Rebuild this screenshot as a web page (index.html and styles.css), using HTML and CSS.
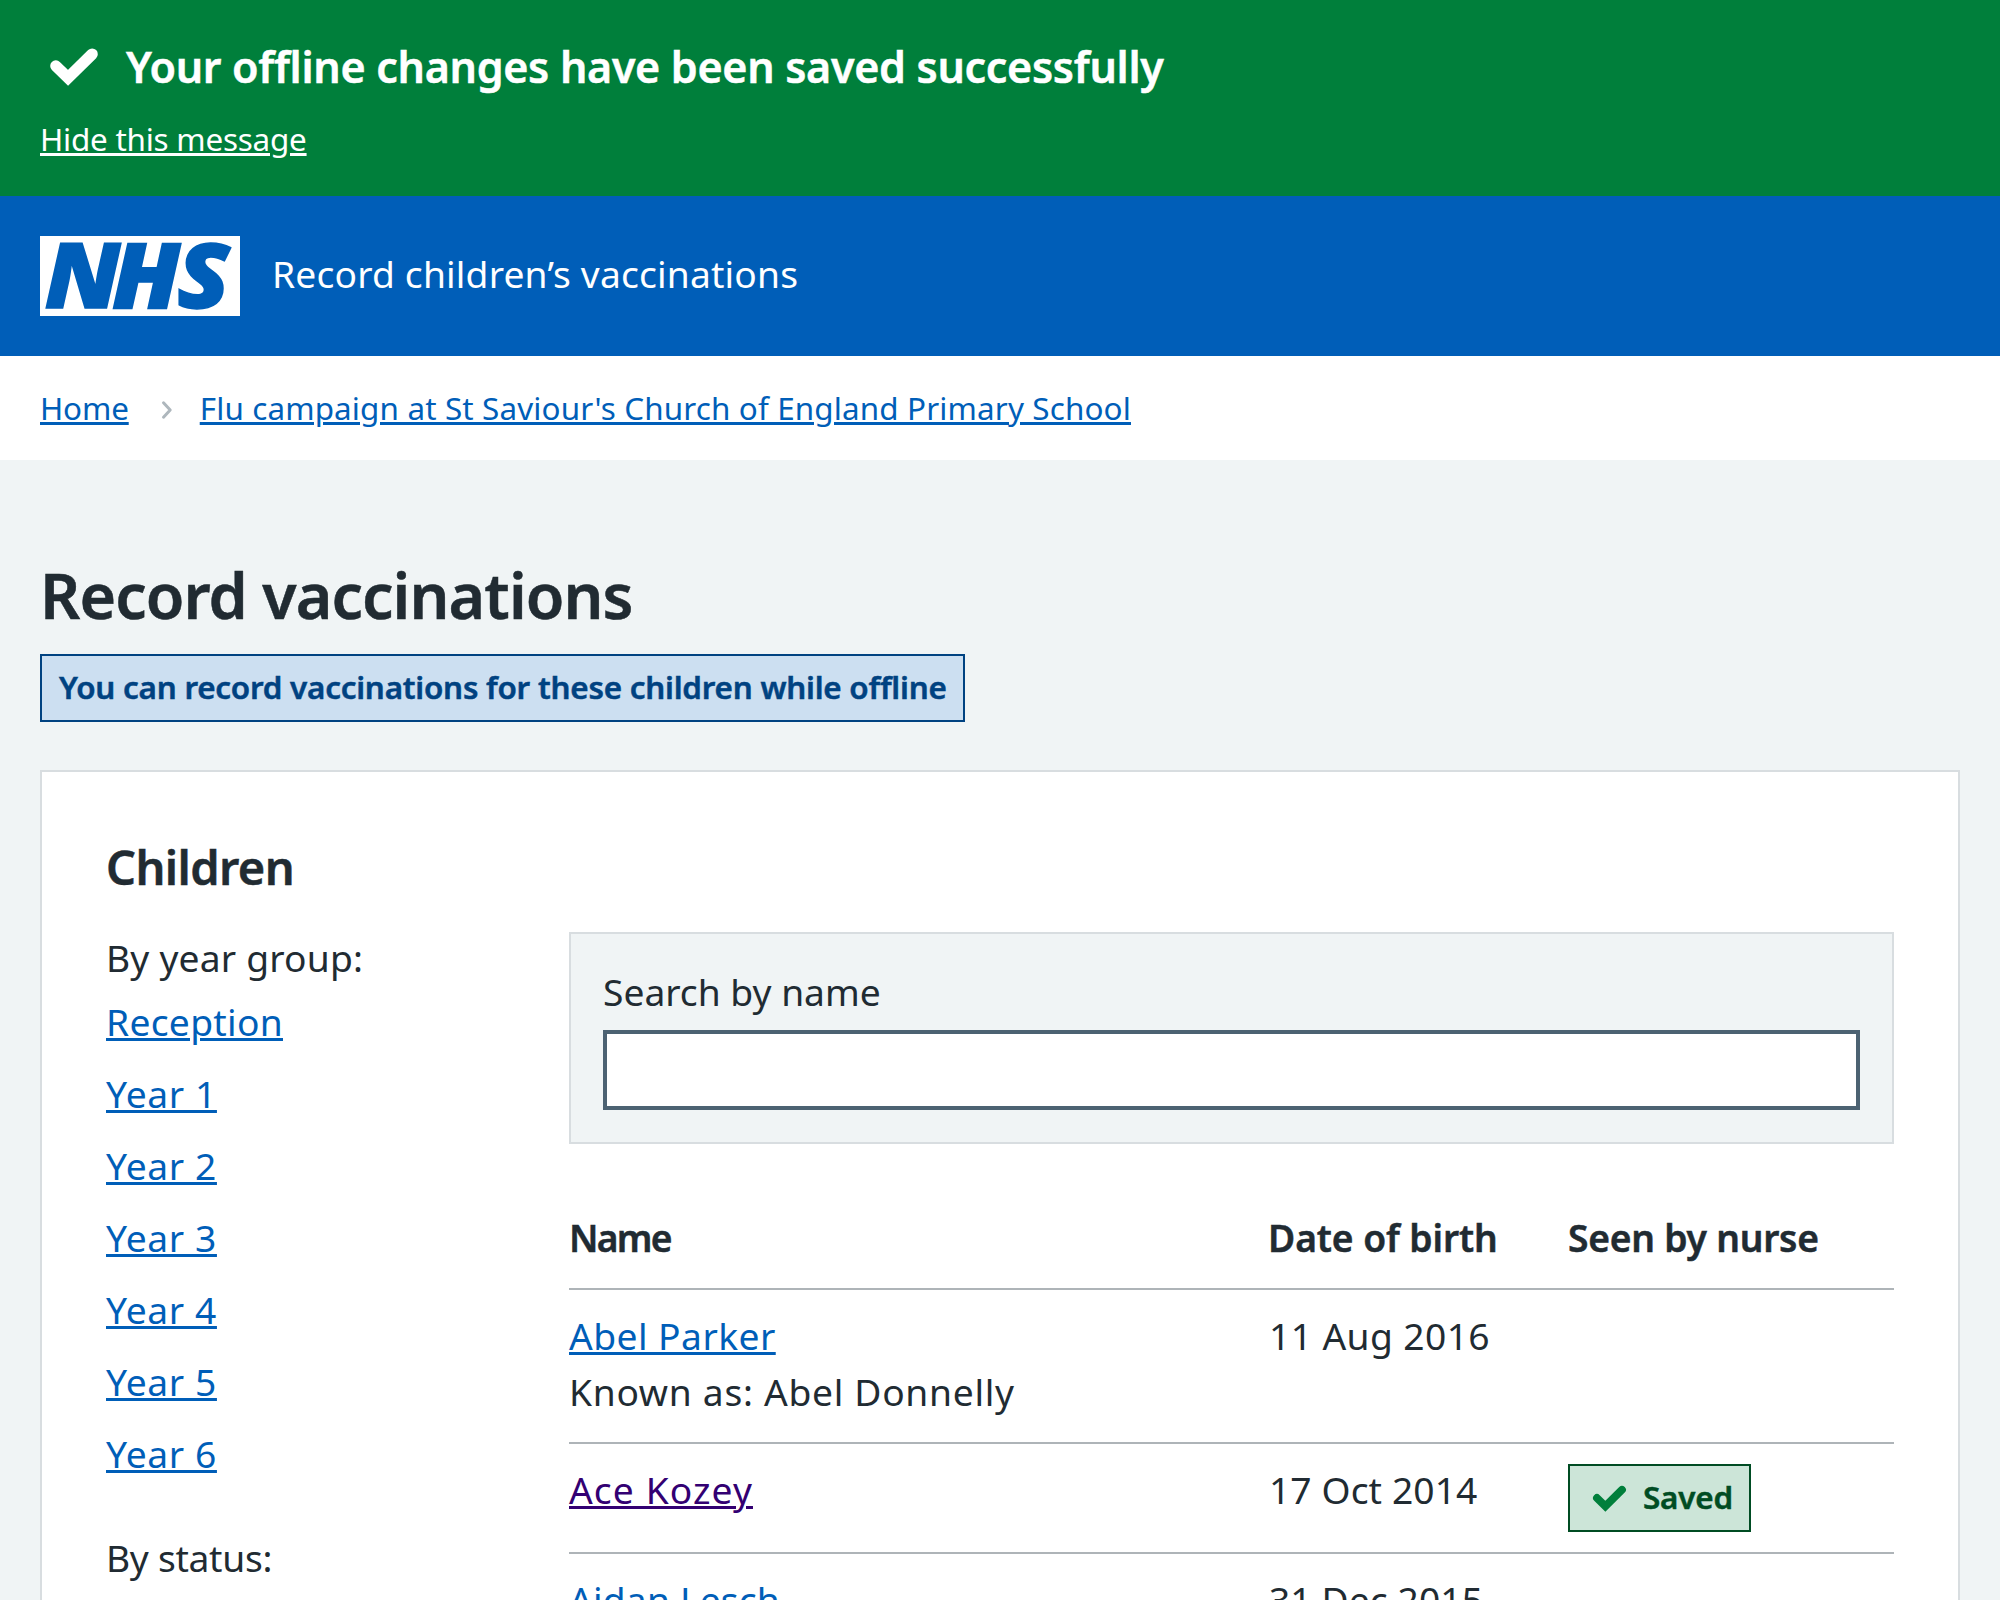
FILE: index.html
```html
<!DOCTYPE html>
<html lang="en">
<head>
<meta charset="utf-8">
<title>Record vaccinations</title>
<link rel="stylesheet" href="styles.css">
</head>
<body>
<div class="banner">
  <div class="banner-row">
    <svg class="banner-tick" viewBox="0 0 24 24" fill="none" stroke="currentColor" stroke-width="4" stroke-linecap="round"><path d="M18.4 7.8l-8.5 8.4L5.6 12"/></svg>
    <h2 class="banner-title">Your offline changes have been saved successfully</h2>
  </div>
  <a class="banner-link" href="#">Hide this message</a>
</div>

<header class="header">
  <svg class="logo" viewBox="0 0 200 80" role="img" aria-label="NHS">
    <rect width="200" height="80" fill="#fff"/>
    <text class="logo-text" transform="scale(1.07 1)" y="72.3" x="4.400 67.4 128.2">NHS</text>
  </svg>
  <span class="service">Record children’s vaccinations</span>
</header>

<nav class="breadcrumb">
  <a class="crumb-home" href="#">Home</a>
  <svg class="chevron" viewBox="0 0 12 20" fill="none" stroke="currentColor" stroke-width="3" stroke-linecap="round" stroke-linejoin="round"><path d="M2.5 2.8 9.2 10l-6.700 7.200"/></svg>
  <a class="crumb-page" href="#">Flu campaign at St Saviour's Church of England Primary School</a>
</nav>

<main class="main">
  <h1 class="title">Record vaccinations</h1>
  <strong class="tag tag-blue">You can record vaccinations for these children while offline</strong>

  <section class="card">
    <h2 class="card-title">Children</h2>
    <div class="columns">
      <aside class="filters">
        <p class="filter-title">By year group:</p>
        <ul class="filter-list">
          <li><a class="reception" href="#">Reception</a></li>
          <li><a href="#">Year 1</a></li>
          <li><a href="#">Year 2</a></li>
          <li><a href="#">Year 3</a></li>
          <li><a href="#">Year 4</a></li>
          <li><a href="#">Year 5</a></li>
          <li><a href="#">Year 6</a></li>
        </ul>
        <p class="filter-title by-status">By status:</p>
      </aside>
      <div class="content">
        <form class="search">
          <label class="search-label" for="search">Search by name</label>
          <input class="search-input" id="search" type="text">
        </form>
        <table class="table">
          <colgroup><col class="col-name"><col class="col-dob"><col></colgroup>
          <thead>
            <tr><th class="th-name">Name</th><th class="th-dob">Date of birth</th><th class="th-seen">Seen by nurse</th></tr>
          </thead>
          <tbody>
            <tr>
              <td><a class="abel" href="#">Abel Parker</a><br><span class="known">Known as: Abel Donnelly</span></td>
              <td class="date-wide">11 Aug 2016</td>
              <td></td>
            </tr>
            <tr>
              <td><a class="visited" href="#">Ace Kozey</a></td>
              <td class="date">17 Oct 2014</td>
              <td class="cell-tag"><strong class="tag tag-green"><svg class="tag-tick" viewBox="0 0 24 24" fill="none" stroke="currentColor" stroke-width="4" stroke-linecap="round"><path d="M18.4 7.8l-8.5 8.4L5.6 12"/></svg>Saved</strong></td>
            </tr>
            <tr>
              <td><a class="aidan" href="#">Aidan Lesch</a></td>
              <td class="date">31 Dec 2015</td>
              <td></td>
            </tr>
          </tbody>
        </table>
      </div>
    </div>
  </section>
</main>
</body>
</html>
```
FILE: styles.css
```css
* { box-sizing: border-box; }

body {
  margin: 0;
  height: 1600px;
  overflow: hidden;
  background: #f0f4f5;
  color: #212b32;
  font: 400 37.2px/56px "Noto Sans", "Open Sans", sans-serif;
}

h1, h2, p, ul { margin: 0; padding: 0; }

/* Bold text sits slightly heavier than the semi-bold face */
h1, h2, th, strong { -webkit-text-stroke: 0.5px currentColor; }

a {
  color: #005eb8;
  text-decoration: underline;
  text-decoration-thickness: 3px;
  text-underline-offset: 2px;
}

/* Success banner */
.banner {
  height: 196px;
  padding: 32px 40px 0;
  background: #007f3b;
  color: #fff;
}
.banner-row { display: flex; align-items: center; gap: 18px; height: 68px; }
.banner-tick { width: 68px; height: 68px; flex: none; }
.banner-title { padding-top: 2px; font-size: 43px; font-weight: 600; letter-spacing: -0.3px; }
.banner-link {
  display: inline-block;
  margin-top: 15px;
  color: #fff;
  font-size: 31.4px;
  line-height: 48px;
  letter-spacing: -0.22px;
}

/* Header */
.header {
  display: flex;
  align-items: center;
  gap: 32px;
  height: 160px;
  padding: 0 40px;
  background: #005eb8;
  color: #fff;
}
.logo { width: 200px; height: 80px; }
.logo-text {
  font: italic 800 89.500px "Open Sans", sans-serif;
  fill: #005eb8;
  stroke: #005eb8;
  stroke-width: 1.5px;
}
.service { padding-bottom: 5px; letter-spacing: 0.18px; }

/* Breadcrumb */
.breadcrumb {
  display: flex;
  align-items: center;
  height: 104px;
  padding: 0 40px;
  background: #fff;
  font-size: 31.4px;
}
.crumb-home { letter-spacing: -0.15px; }
.crumb-page { letter-spacing: 0.14px; }
.chevron { width: 12px; height: 20px; margin: 4px 27px 0 32px; color: #aeb7bd; }

/* Page */
.main { padding: 95px 40px 0; }
.title {
  margin-bottom: 19px;
  font-size: 62.7px;
  font-weight: 600;
  line-height: 80px;
  letter-spacing: -0.9px;
}
.tag {
  display: flex;
  align-items: center;
  width: fit-content;
  height: 68px;
  padding: 0 16px 2px;
  border: 2px solid;
  font-size: 31.4px;
  font-weight: 600;
}
.tag-blue {
  width: 925px;
  padding-left: 17px;
  background: #ccdff1;
  color: #004281;
  letter-spacing: -0.23px;
  white-space: nowrap;
}
.tag-green { width: 183px; gap: 10px; background: #cce5d8; color: #004c23; letter-spacing: -0.15px; }
.tag-tick { width: 48px; height: 48px; margin-top: 2px; color: #007f3b; }

.card {
  height: 830px;
  margin-top: 48px;
  padding: 67px 64px 0;
  border: 2px solid #d8dde0;
  border-bottom: 0;
  background: #fff;
}
.card-title { margin-bottom: 35px; font-size: 47px; font-weight: 600; letter-spacing: -0.6px; }
.columns { display: grid; grid-template-columns: 463px 1fr; }

/* Filters */
.filter-title { letter-spacing: 0.2px; }
.filter-list { list-style: none; line-height: 72px; letter-spacing: 0.6px; }
.reception { letter-spacing: 0.3px; }
.by-status { margin-top: 40px; letter-spacing: -0.3px; }

/* Search */
.search {
  height: 212px;
  margin-top: 2px;
  padding: 30px 32px 0;
  border: 2px solid #d8dde0;
  background: #f0f4f5;
}
.search-label { display: block; margin-bottom: 10px; }
.search-input {
  display: block;
  width: 100%;
  height: 80px;
  border: 4px solid #4c6272;
  border-radius: 0;
  background: #fff;
}

/* Table */
.table {
  width: 100%;
  margin-top: 66px;
  border-spacing: 0;
  table-layout: fixed;
}
.col-name { width: 699px; }
.col-dob { width: 300px; }
th {
  padding: 0 0 22px;
  border-bottom: 2px solid #aeb4b8;
  font-weight: 600;
  text-align: left;
}
td { padding: 18px 0 22px; border-bottom: 2px solid #aeb4b8; vertical-align: top; }
.th-name { letter-spacing: -1.7px; }
.th-dob { letter-spacing: -0.07px; }
.th-seen { letter-spacing: -0.22px; }
.abel { letter-spacing: 0.45px; }
.known { letter-spacing: 0.7px; }
.visited { color: #330072; letter-spacing: 1.1px; }
.aidan { letter-spacing: 0.2px; }
.date-wide { padding-left: 1px; letter-spacing: 0.4px; }
.date { padding-left: 1px; letter-spacing: 0.1px; }
.cell-tag { padding: 20px 0; }
```
